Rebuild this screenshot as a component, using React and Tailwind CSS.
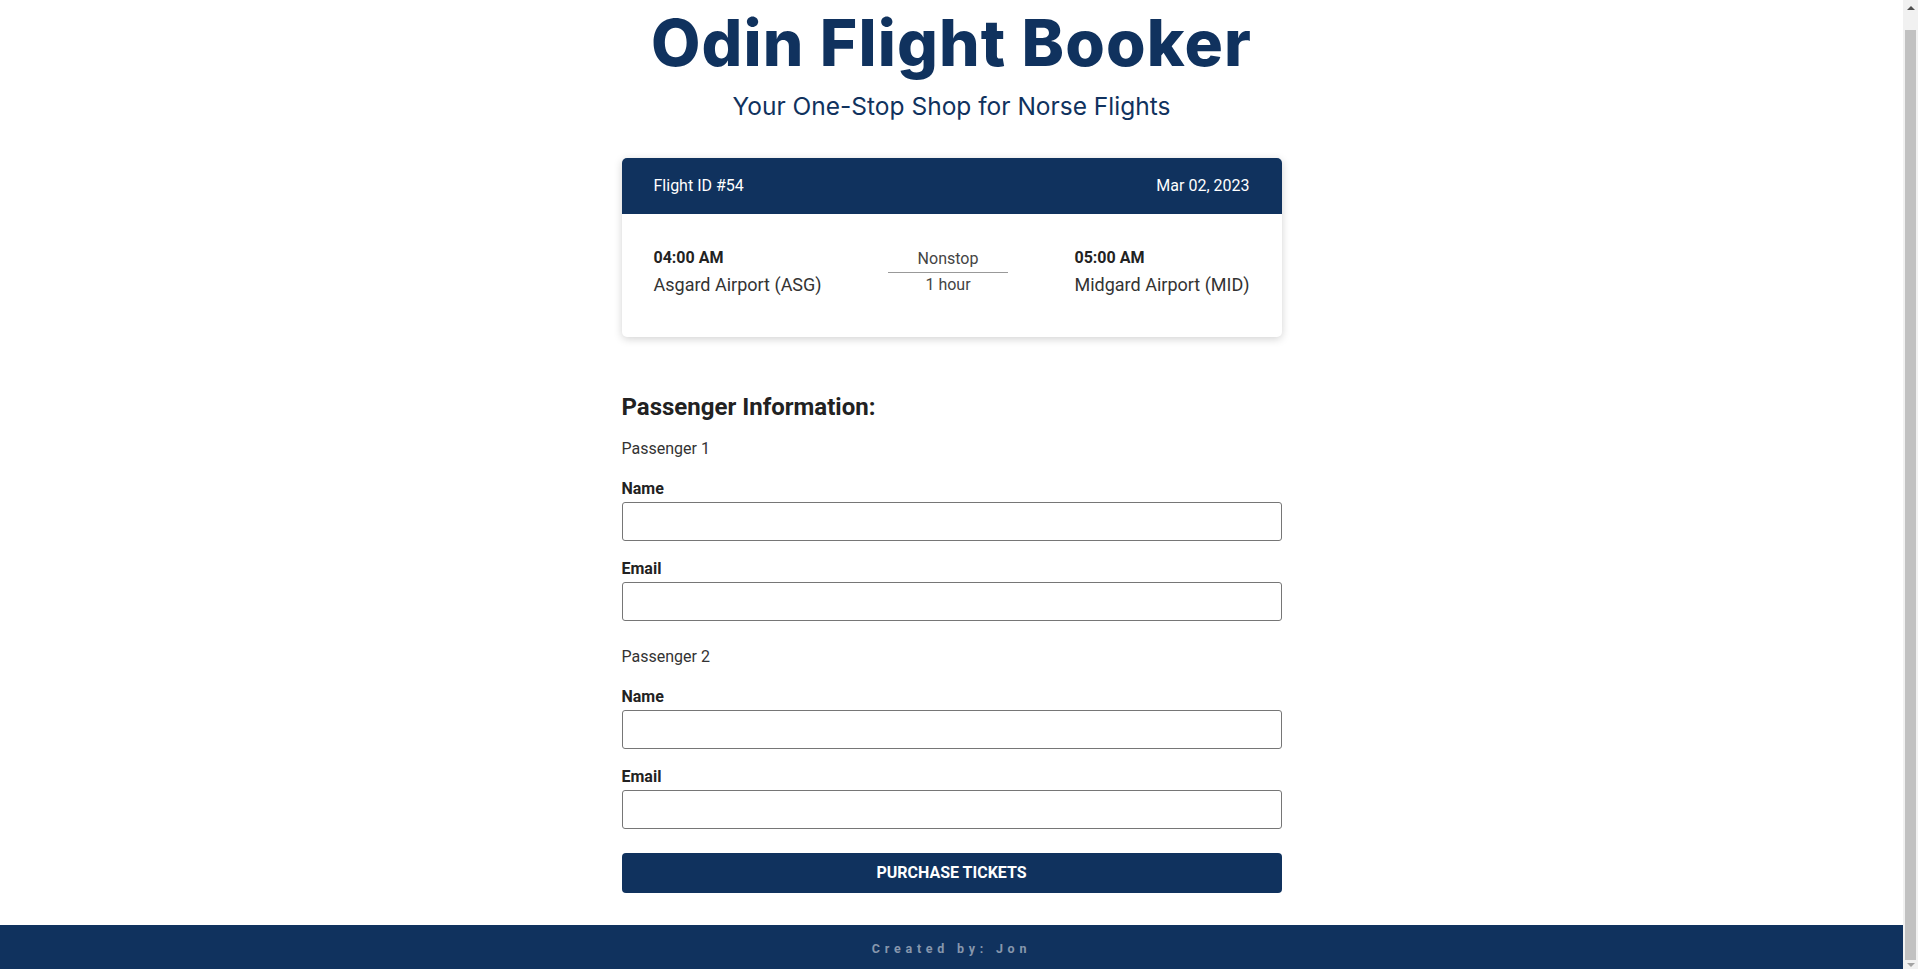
const PASSENGERS = [1, 2];

function Field({ label, type }) {
  return (
    <div className="mt-4">
      <label className="block font-bold text-[16px] leading-6 text-[#222]">{label}</label>
      <input
        type={type}
        className="mt-px block w-full h-[39px] border border-[#767676] rounded-[3px] px-2 bg-white"
      />
    </div>
  );
}

function FakeScrollbar() {
  return (
    <div className="sticky top-0 h-screen w-[15px] shrink-0 bg-[#f1f1f1] flex flex-col items-center">
      <div className="h-[15px] flex items-center justify-center">
        <div className="w-0 h-0 border-l-[4px] border-r-[4px] border-b-[4px] border-l-transparent border-r-transparent border-b-[#505050]" />
      </div>
      <div className="mt-[15px] w-[11px] flex-1 bg-[#c1c1c1]" />
      <div className="h-[9px] flex items-center justify-center">
        <div className="w-0 h-0 border-l-[4px] border-r-[4px] border-t-[4px] border-l-transparent border-r-transparent border-t-[#a3a3a3]" />
      </div>
    </div>
  );
}

export default function App() {
  return (
    <div className="flex bg-white">
      <div className="flex-1 min-h-screen flex flex-col font-['Roboto',sans-serif] text-[#333]">
        <header className="text-center text-[#10325e]">
          <h1 className="pt-[3px] font-['Inter',sans-serif] font-extrabold text-[64px] leading-[80px] tracking-[0.018em]">
            Odin Flight Booker
          </h1>
          <p className="font-['Inter',sans-serif] text-[24.5px] leading-[36px] mt-[5px]">
            Your One-Stop Shop for Norse Flights
          </p>
        </header>

        <main className="w-[660px] mx-auto mt-[34px]">
          {/* Flight card */}
          <div className="rounded-[5px] overflow-hidden bg-white shadow-[0_2px_8px_rgba(0,0,0,0.18)]">
            <div className="h-14 bg-[#10325e] text-white flex items-center justify-between px-8 text-[16px]">
              <span>Flight ID #54</span>
              <span>Mar 02, 2023</span>
            </div>
            <div className="flex items-center justify-between px-8 pt-[32px] pb-[40px]">
              <div>
                <div className="font-bold text-[16px] leading-6 text-[#222]">04:00 AM</div>
                <div className="mt-[3px] text-[18px] leading-6">Asgard Airport (ASG)</div>
              </div>
              <div className="w-[120px] text-center text-[16px] text-[#444]">
                <div className="leading-6 border-b border-[#999] pb-[1px]">Nonstop</div>
                <div className="leading-6">1 hour</div>
              </div>
              <div>
                <div className="font-bold text-[16px] leading-6 text-[#222]">05:00 AM</div>
                <div className="mt-[3px] text-[18px] leading-6">Midgard Airport (MID)</div>
              </div>
            </div>
          </div>

          {/* Passengers */}
          <form className="mt-[52px]">
            <h2 className="font-bold text-[24px] leading-9 text-[#222]">Passenger Information:</h2>
            {PASSENGERS.map((n, i) => (
              <div key={n} className={i === 0 ? "mt-3" : "mt-[24px]"}>
                <div className="text-[16px] leading-6">Passenger {n}</div>
                <Field label="Name" type="text" />
                <Field label="Email" type="email" />
              </div>
            ))}
            <button
              type="button"
              className="mt-[24px] w-full h-[40px] rounded-[4px] bg-[#10325e] text-white font-bold uppercase text-[16px]"
            >
              Purchase Tickets
            </button>
          </form>
        </main>

        <footer className="mt-auto h-[44px] pt-[4px] bg-[#10325e] flex items-center justify-center">
          <span className="text-[12.5px] font-bold tracking-[0.38em] text-[#8797ad]">Created by: Jon</span>
        </footer>
      </div>
      <FakeScrollbar />
    </div>
  );
}
